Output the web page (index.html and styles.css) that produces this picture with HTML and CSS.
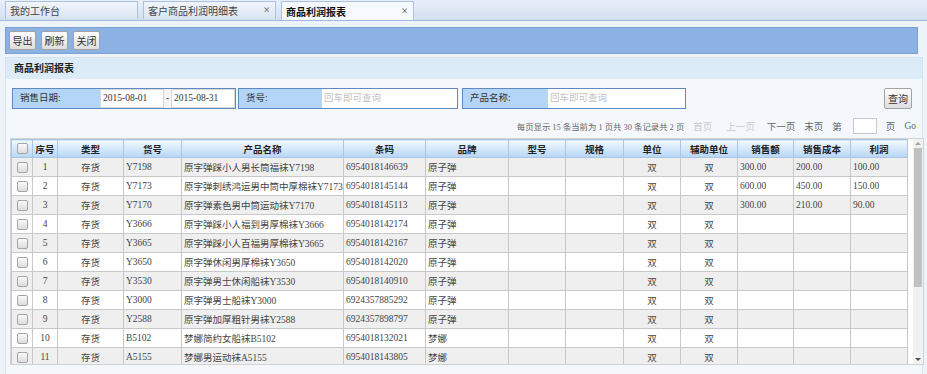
FILE: index.html
```html
<!DOCTYPE html>
<html lang="zh-CN">
<head>
<meta charset="UTF-8">
<title>商品利润报表</title>
<link rel="stylesheet" href="styles.css">
</head>
<body>
<!-- 标签页 -->
<div class="tabs">
    <div class="tab">我的工作台</div>
    <div class="tab">客户商品利润明细表<span class="close">&times;</span></div>
    <div class="tab active">商品利润报表<span class="close">&times;</span></div>
</div>

<!-- 工具栏 -->
<div class="toolbar">
    <button class="btn">导出</button>
    <button class="btn">刷新</button>
    <button class="btn">关闭</button>
</div>

<div class="panel">
    <div class="panel-title">商品利润报表</div>
    <div class="panel-body">
        <div class="search">
            <div class="field date-field">
                <span class="label">销售日期:</span>
                <span class="input date">2015-08-01</span>
                <span class="dash">-</span>
                <span class="input date">2015-08-31</span>
            </div>
            <div class="field code-field">
                <span class="label">货号:</span>
                <span class="input hint wide">回车即可查询</span>
            </div>
            <div class="field name-field">
                <span class="label">产品名称:</span>
                <span class="input hint wide">回车即可查询</span>
            </div>
            <button class="btn query">查询</button>
        </div>

        <div class="pager">
            <span class="info">每页显示 15 条当前为 1 页共 30 条记录共 2 页</span>
            <span class="off">首页</span>
            <span class="off prev">上一页</span>
            <span class="next">下一页</span>
            <span>末页</span>
            <span>第</span>
            <span class="page-box"></span>
            <span>页</span>
            <span>Go</span>
        </div>

        <div class="grid">
            <div class="grid-body">
                <table>
                    <colgroup>
                        <col style="width:21px"><col style="width:25px"><col style="width:66px"><col style="width:58px">
                        <col style="width:162px"><col style="width:82px"><col style="width:83px"><col style="width:57px">
                        <col style="width:58px"><col style="width:57px"><col style="width:57px"><col style="width:56px">
                        <col style="width:57px"><col style="width:57px">
                    </colgroup>
                    <thead>
                        <tr>
                            <th><span class="chk"></span></th><th>序号</th><th>类型</th><th>货号</th><th>产品名称</th>
                            <th>条码</th><th>品牌</th><th>型号</th><th>规格</th><th>单位</th><th>辅助单位</th>
                            <th>销售额</th><th>销售成本</th><th>利润</th>
                        </tr>
                    </thead>
                    <tbody id="rows"></tbody>
                </table>
            </div>
            <div class="scrollbar">
                <span class="arrow up"></span>
                <span class="thumb"></span>
                <span class="arrow down"></span>
            </div>
        </div>
    </div>
</div>

<script>
    // 表格数据
    var data = [
        ["1", "Y7198", "原字弹踩小人男长筒福袜Y7198", "6954018146639", "原子弹", "300.00", "200.00", "100.00"],
        ["2", "Y7173", "原字弹刺绣鸿运男中筒中厚棉袜Y7173", "6954018145144", "原子弹", "600.00", "450.00", "150.00"],
        ["3", "Y7170", "原字弹素色男中筒运动袜Y7170", "6954018145113", "原子弹", "300.00", "210.00", "90.00"],
        ["4", "Y3666", "原字弹踩小人福到男厚棉袜Y3666", "6954018142174", "原子弹", "", "", ""],
        ["5", "Y3665", "原字弹踩小人百福男厚棉袜Y3665", "6954018142167", "原子弹", "", "", ""],
        ["6", "Y3650", "原字弹休闲男厚棉袜Y3650", "6954018142020", "原子弹", "", "", ""],
        ["7", "Y3530", "原字弹男士休闲船袜Y3530", "6954018140910", "原子弹", "", "", ""],
        ["8", "Y3000", "原字弹男士船袜Y3000", "6924357885292", "原子弹", "", "", ""],
        ["9", "Y2588", "原字弹加厚粗针男袜Y2588", "6924357898797", "原子弹", "", "", ""],
        ["10", "B5102", "梦娜简约女船袜B5102", "6954018132021", "梦娜", "", "", ""],
        ["11", "A5155", "梦娜男运动袜A5155", "6954018143805", "梦娜", "", "", ""]
    ];
    var html = "";
    data.forEach(function (r) {
        html += '<tr><td class="c"><span class="chk"></span></td>' +
            '<td class="c">' + r[0] + '</td><td class="c">存货</td>' +
            '<td>' + r[1] + '</td><td>' + r[2] + '</td><td>' + r[3] + '</td><td>' + r[4] + '</td>' +
            '<td></td><td></td><td class="c">双</td><td class="c">双</td>' +
            '<td>' + r[5] + '</td><td>' + r[6] + '</td><td>' + r[7] + '</td></tr>';
    });
    document.getElementById("rows").innerHTML = html;
</script>
</body>
</html>
```

FILE: styles.css
```css
body {
    margin: 0;
    background: #eef3fa;
    font-family: "Liberation Serif", "Noto Sans CJK SC", serif;
    font-size: 9.5px;
    color: #333;
    height: 374px;
    overflow: hidden;
}

.tabs {
    height: 19px;
    padding: 1px 0 0 5px;
    display: flex;
    gap: 5px;
    background: linear-gradient(#e9eff8, #d3dff0);
    border-bottom: 1px solid #9dbbe2;
}

.tab {
    width: 125px;
    height: 17px;
    padding: 0 2px 0 4px;
    display: flex;
    align-items: center;
    justify-content: space-between;
    font-size: 10px;
    color: #444;
    background: linear-gradient(#f1f5fb, #dae4f3);
    border: 1px solid #a9c2e4;
    border-bottom: none;
}

.tab.active {
    background: #f6f9fd;
    font-weight: bold;
    color: #111;
    height: 18px;
}

.tab .close {
    font-weight: normal;
    font-size: 12px;
    color: #555;
    margin-right: 3px;
}

.toolbar {
    margin: 6px 9px 3px 5px;
    height: 25px;
    padding: 0 0 0 3px;
    display: flex;
    align-items: center;
    gap: 5px;
    background: #8cb2e4;
    border: 1px solid #7ba0d4;
}

.btn {
    font-family: inherit;
    font-size: 10px;
    color: #333;
    height: 19px;
    width: 27px;
    padding: 0;
    border: 1px solid #a3a3a3;
    border-radius: 2px;
    background: linear-gradient(#fdfdfd, #dedede);
}

.panel {
    margin: 0 4px 0 5px;
    border: 1px solid #d4e2f0;
    background: #f4f8fc;
    height: 318px;
}

.panel-title {
    height: 21px;
    line-height: 21px;
    padding-left: 8px;
    background: #dcebf8;
    font-weight: bold;
    font-size: 10px;
    color: #222;
}

.panel-body {
    padding: 9px 0 0 3px;
}

.search {
    display: flex;
    align-items: center;
    padding-left: 3px;
    height: 21px;
}

.field {
    display: flex;
    align-items: stretch;
    height: 19px;
    border: 1px solid #5f89bf;
    background: #fff;
}

.field .label {
    padding-left: 7px;
    line-height: 19px;
    background: #b3d5f7;
    color: #333;
}

.date-field .label { width: 80px; }
.code-field { margin-left: 2px; }
.code-field .label { width: 76px; }
.name-field { margin-left: 4px; }
.name-field .label { width: 78px; }

.input {
    line-height: 17px;
    padding-left: 2px;
    color: #333;
}

.input.date {
    width: 60px;
    border: 1px solid #d8d8d8;
}

.dash {
    width: 7px;
    line-height: 19px;
    text-align: center;
    background: #f4f4f4;
}

.input.wide {
    width: 133px;
    line-height: 19px;
}

.name-field .input.wide {
    width: 135px;
}

.hint {
    color: #c3c3c3;
}

.query {
    margin-left: auto;
    margin-right: 10px;
    height: 21px;
    width: 28px;
}

.pager {
    display: flex;
    justify-content: flex-end;
    align-items: center;
    gap: 9px;
    height: 15px;
    margin: 9px 6px 0 0;
    color: #666;
}

.pager .info {
    font-size: 8.4px;
}

.pager .off {
    color: #c9c9c9;
}

.pager .prev {
    margin-left: 5px;
}

.pager .next {
    margin-left: 3px;
}

.pager .page-box {
    width: 22px;
    height: 14px;
    background: #fff;
    border: 1px solid #c9c9c9;
    margin-left: 2px;
}

.grid {
    display: flex;
    margin: 5px 0 0 1px;
    width: 912px;
    height: 225px;
    border: 1px solid #d2d2d2;
    background: #fff;
    overflow: hidden;
}

.grid-body {
    width: 902px;
    overflow: hidden;
}

table {
    table-layout: fixed;
    border-collapse: collapse;
    width: 896px;
}

th, td {
    border: 1px solid #c8c8c8;
    padding: 0 2px;
    white-space: nowrap;
    overflow: hidden;
}

th {
    height: 17px;
    background: linear-gradient(#f2f8fe, #b6d6f6);
    border-color: #a9c6e4;
    font-weight: bold;
    color: #222;
    text-align: center;
}

td {
    height: 18px;
    color: #444;
}

tbody tr:nth-child(odd) td {
    background: #efefef;
}

td.c {
    text-align: center;
}

.chk {
    display: inline-block;
    width: 9px;
    height: 9px;
    vertical-align: middle;
    border: 1px solid #a5a5a5;
    border-radius: 2px;
    background: linear-gradient(#fafafa, #dcdcdc);
}

.scrollbar {
    width: 10px;
    margin-left: 2px;
    background: #f1f1f1;
    position: relative;
}

.scrollbar .thumb {
    position: absolute;
    left: 1px;
    right: 1px;
    top: 9px;
    height: 139px;
    background: #c1c1c1;
}

.arrow {
    position: absolute;
    left: 2px;
    width: 0;
    height: 0;
    border-left: 3px solid transparent;
    border-right: 3px solid transparent;
}

.arrow.up {
    top: 3px;
    border-bottom: 3px solid #a3a3a3;
}

.arrow.down {
    bottom: 3px;
    border-top: 3px solid #505050;
}
```
